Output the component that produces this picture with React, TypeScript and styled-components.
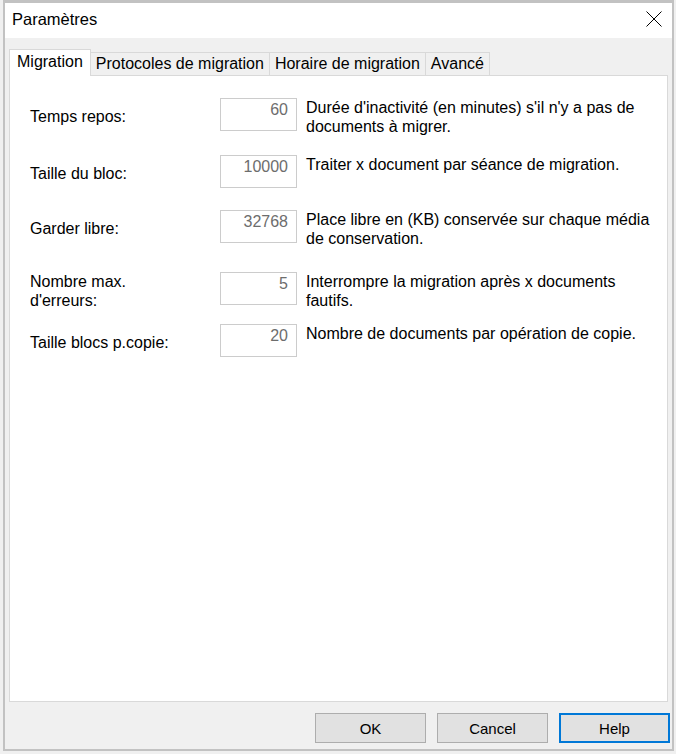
import React from 'react'
import styled, { createGlobalStyle } from 'styled-components'

const GlobalStyle = createGlobalStyle`
  html, body {
    margin: 0;
    padding: 0;
    background: #f0f0f0;
    font-family: "Liberation Sans", Arial, sans-serif;
  }
`

const Window = styled.div`
  box-sizing: border-box;
  width: 671px;
  height: 751px;
  margin-left: 3px;
  border: 2px solid #c2c2c2;
  border-top-width: 3px;
  display: flex;
  flex-direction: column;
  background: #f0f0f0;
`

const TitleBar = styled.div`
  height: 35px;
  background: #ffffff;
  display: flex;
  align-items: center;
  justify-content: space-between;
  padding: 0 10px 0 7px;
`

const Title = styled.span`
  font-size: 16.5px;
  color: #000;
  margin-top: -2px;
`

const CloseButton = styled.button`
  width: 16px;
  height: 16px;
  padding: 0;
  border: none;
  background: transparent;
  display: flex;
  margin-top: -3px;
`

const Body = styled.div`
  flex: 1;
  display: flex;
  flex-direction: column;
  padding: 11px 2px 6px 4px;
`

const TabBar = styled.div`
  display: flex;
  align-items: flex-end;
  height: 26px;
  position: relative;
  z-index: 1;
`

const Tab = styled.div<{ $active?: boolean }>`
  box-sizing: border-box;
  height: ${({ $active }) => ($active ? '27px' : '24px')};
  margin-bottom: -1px;
  padding: 0 ${({ $active }) => ($active ? '7px' : '5px')};
  display: flex;
  align-items: center;
  font-size: 16px;
  color: #000;
  background: ${({ $active }) => ($active ? '#ffffff' : '#f0f0f0')};
  border: 1px solid #d9d9d9;
  border-bottom: ${({ $active }) => ($active ? 'none' : '1px solid #d9d9d9')};
  padding-bottom: ${({ $active }) => ($active ? '3px' : '1px')};
  & + & {
    margin-left: -1px;
  }
`

const Panel = styled.div`
  box-sizing: border-box;
  flex: 1;
  margin-right: 2px;
  background: #ffffff;
  border: 1px solid #d9d9d9;
  padding: 22px 0 0 20px;
`

const Row = styled.div<{ $top: number }>`
  display: grid;
  grid-template-columns: 190px 77px 1fr;
  grid-template-rows: 33px;
  margin-top: ${({ $top }) => $top}px;
  font-size: 16px;
  line-height: 19px;
  color: #000;
`

const Label = styled.div<{ $multi?: boolean }>`
  align-self: ${({ $multi }) => ($multi ? 'start' : 'center')};
  padding-top: ${({ $multi }) => ($multi ? '0' : '3px')};
  white-space: nowrap;
`

const Field = styled.div`
  box-sizing: border-box;
  height: 33px;
  border: 1px solid #cccccc;
  padding: 1px 8px 0 0;
  text-align: right;
  color: #6d6d6d;
  font-size: 16px;
  line-height: 19px;
`

const Description = styled.div`
  padding-left: 9px;
  padding-right: 15px;
`

const Footer = styled.div`
  display: flex;
  justify-content: flex-end;
  gap: 10px;
  margin-top: 11px;
`

const Button = styled.button<{ $default?: boolean }>`
  box-sizing: border-box;
  width: 111px;
  height: 30px;
  background: #e1e1e1;
  border: ${({ $default }) => ($default ? '2px solid #0078d7' : '1px solid #adadad')};
  font-family: "Liberation Sans", Arial, sans-serif;
  font-size: 15px;
  color: #000;
  padding: 0;
  & + & {
    margin-left: 1px;
  }
`

const rows = [
  { top: 0, label: 'Temps repos:', value: '60', text: "Durée d'inactivité (en minutes) s'il n'y a pas de documents à migrer." },
  { top: 24, label: 'Taille du bloc:', value: '10000', text: 'Traiter x document par séance de migration.' },
  { top: 22, label: 'Garder libre:', value: '32768', text: 'Place libre en (KB) conservée sur chaque média de conservation.' },
  { top: 29, label: 'Nombre max.\nd\'erreurs:', value: '5', text: 'Interrompre la migration après x documents fautifs.' },
  { top: 19, label: 'Taille blocs p.copie:', value: '20', text: 'Nombre de documents par opération de copie.' },
]

const tabs = ['Migration', 'Protocoles de migration', 'Horaire de migration', 'Avancé']

export default function App() {
  return (
    <>
      <GlobalStyle />
      <Window>
        <TitleBar>
          <Title>Paramètres</Title>
          <CloseButton aria-label="Fermer">
            <svg width="16" height="16" viewBox="0 0 16 16">
              <path d="M0.5 0.5 L15.5 15.5 M15.5 0.5 L0.5 15.5" stroke="#000" strokeWidth="1" fill="none" />
            </svg>
          </CloseButton>
        </TitleBar>
        <Body>
          <TabBar>
            {tabs.map((t, i) => (
              <Tab key={t} $active={i === 0}>{t}</Tab>
            ))}
          </TabBar>
          <Panel>
            {rows.map((r) => {
              const multi = r.label.includes('\n')
              return (
                <Row key={r.label} $top={r.top}>
                  <Label $multi={multi}>
                    {r.label.split('\n').map((l) => (
                      <div key={l}>{l}</div>
                    ))}
                  </Label>
                  <Field>{r.value}</Field>
                  <Description>{r.text}</Description>
                </Row>
              )
            })}
          </Panel>
          <Footer>
            <Button>OK</Button>
            <Button>Cancel</Button>
            <Button $default>Help</Button>
          </Footer>
        </Body>
      </Window>
    </>
  )
}
